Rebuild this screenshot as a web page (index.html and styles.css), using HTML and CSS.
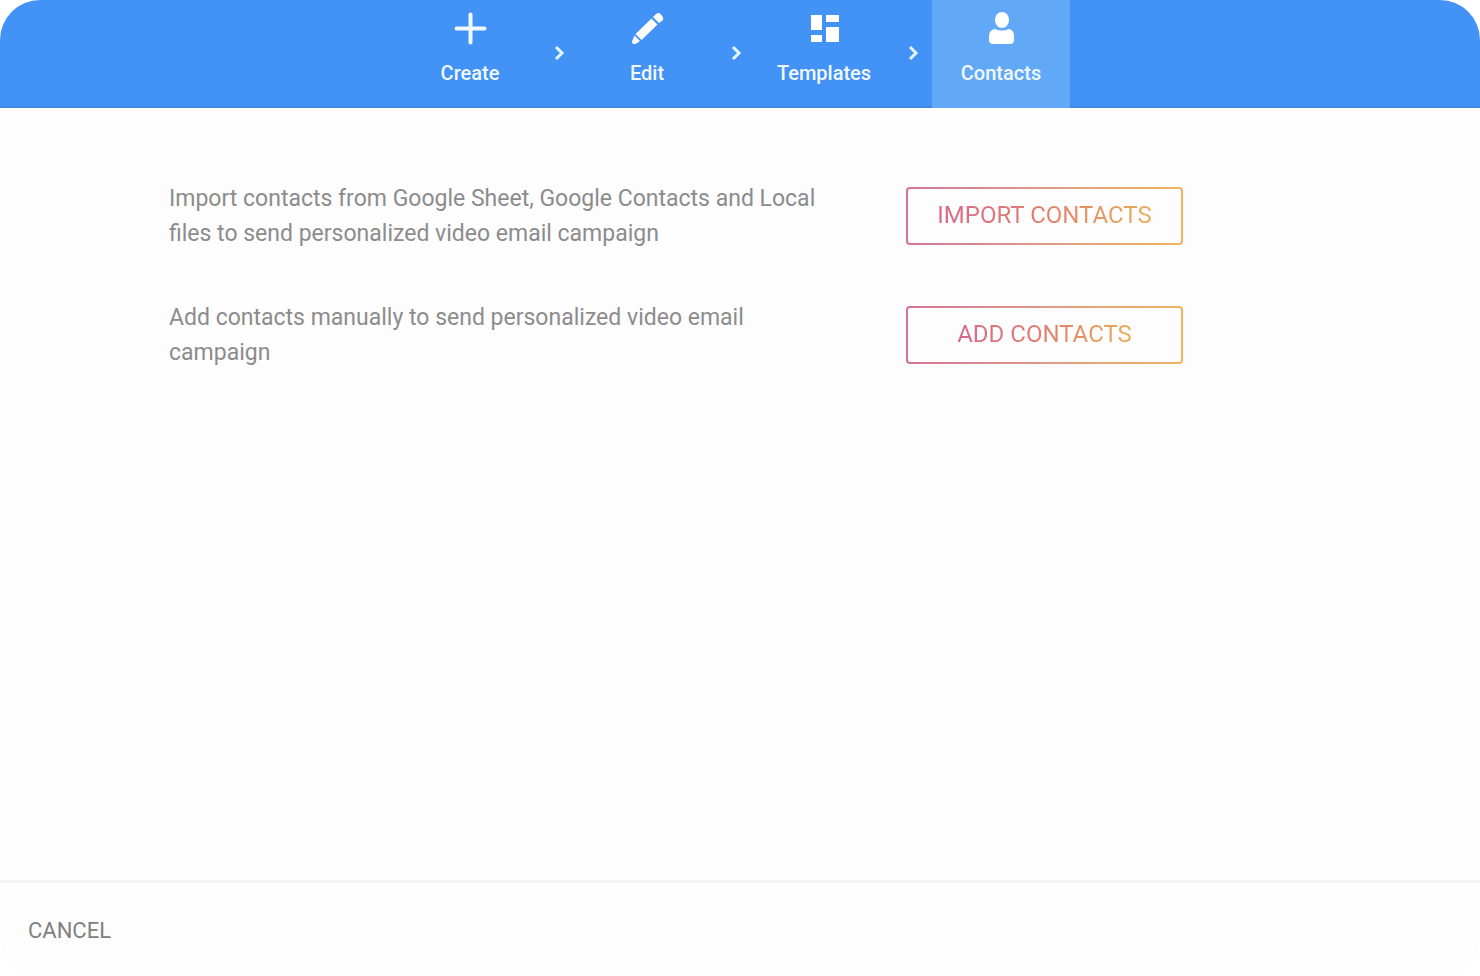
FILE: index.html
```html
<!doctype html>
<html lang="en">
  <head>
    <meta charset="utf-8">
    <title>Contacts</title>
    <link rel="stylesheet" href="styles.css">
  </head>
  <body>
    <div class="window">
      <nav class="steps">
        <a class="step" href="#create">
          <svg class="icon" viewBox="0 0 36 36"><path d="M18.500 4.500v28M4.500 18.500h28" fill="none" stroke="currentColor" stroke-width="4" stroke-linecap="round"/></svg>
          Create
        </a>
        <svg class="chevron" viewBox="0 0 12 18"><path d="M3 3l6 6-6 6"/></svg>
        <a class="step" href="#edit">
          <svg class="icon" viewBox="0 0 36 36"><path d="M5.500 25.500L11 31L9 32.500Q7 34 5 34Q3 34 3 31.500ZM6.500 24L22.500 8.500L28.500 14.500L12.500 30ZM24 7L27 4Q29.500 2 31.500 4L33.500 6.500Q35 8.500 33.500 10.500L30 13Z"/></svg>
          Edit
        </a>
        <svg class="chevron" viewBox="0 0 12 18"><path d="M3 3l6 6-6 6"/></svg>
        <a class="step" href="#templates">
          <svg class="icon" viewBox="0 0 36 36"><path d="M5 5h11v15H5zM20 5h13v7H20zM5 25h11v7H5zM20 17h13v15H20z"/></svg>
          Templates
        </a>
        <svg class="chevron" viewBox="0 0 12 18"><path d="M3 3l6 6-6 6"/></svg>
        <a class="step active" href="#contacts">
          <svg class="icon" viewBox="0 0 36 36"><ellipse cx="19" cy="10" rx="7" ry="8"/><path d="M12 19Q19 22 26 19Q31 20 31 26V30Q31 34 27 34H10Q6 34 6 30V26Q6 20 12 19Z"/></svg>
          Contacts
        </a>
      </nav>

      <main class="options">
        <div class="option">
          <p>Import contacts from Google Sheet, Google Contacts and Local files to send personalized video email campaign</p>
          <button class="outline" type="button"><span>IMPORT CONTACTS</span></button>
        </div>
        <div class="option">
          <p>Add contacts manually to send personalized video email campaign</p>
          <button class="outline" type="button"><span>ADD CONTACTS</span></button>
        </div>
      </main>

      <footer class="actions">
        <button class="cancel" type="button">CANCEL</button>
      </footer>
    </div>
  </body>
</html>
```

FILE: styles.css
```css
* {
  box-sizing: border-box;
}
body {
  margin: 0;
  background: #fff;
  font-family: Roboto, sans-serif;
}
.window {
  display: flex;
  flex-direction: column;
  min-height: 100vh;
  overflow: hidden;
  border-radius: 40px;
  background: #fdfdfd;
}
.steps {
  display: flex;
  justify-content: center;
  height: 108px;
  padding-right: 9px;
  border-bottom: 2px solid #4388dc;
  background: #4392f6;
  color: #fff;
}
.step {
  display: flex;
  flex-direction: column;
  align-items: center;
  width: 138px;
  height: 108px;
  padding-top: 10px;
  color: #f0f9ff;
  font-size: 20px;
  font-weight: 500;
  line-height: 24px;
  text-decoration: none;
}
.step.active {
  background: #61a8f7;
}
.icon {
  width: 36px;
  height: 36px;
  margin-bottom: 15px;
  fill: #fff;
}
.chevron {
  width: 12px;
  height: 18px;
  margin: 44px 13px 0 14px;
  fill: none;
  stroke: #e4f6ff;
  stroke-width: 3;
}
.options {
  flex: 1;
  display: flex;
  flex-direction: column;
  gap: 49px;
  max-width: 1183px;
  padding: 73px 0 48px 169px;
}
.option {
  display: grid;
  grid-template-columns: 1fr 277px;
  gap: 60px;
  align-items: center;
}
.option p {
  margin: 0;
  color: #8c8c8c;
  font-size: 23px;
  line-height: 35px;
}
.outline {
  height: 58px;
  padding: 0 0 2px;
  border: 2px solid transparent;
  border-radius: 4px;
  background:
    linear-gradient(#fdfdfd, #fdfdfd) padding-box,
    linear-gradient(90deg, #d2749a, #df9a88 50%, #f0b45c) border-box;
  font-family: inherit;
  font-size: 24px;
  line-height: 28px;
}
.outline span {
  background: linear-gradient(90deg, #d8688a, #e0806e 50%, #e9ad58);
  background-clip: text;
  color: transparent;
}
.actions {
  display: flex;
  align-items: center;
  height: 96px;
  padding: 2px 28px 0;
  border-top: 3px solid #f3f3f2;
}
.cancel {
  padding: 0;
  border: 0;
  background: none;
  color: #808080;
  font-family: inherit;
  font-size: 22px;
  line-height: 28px;
}
```
